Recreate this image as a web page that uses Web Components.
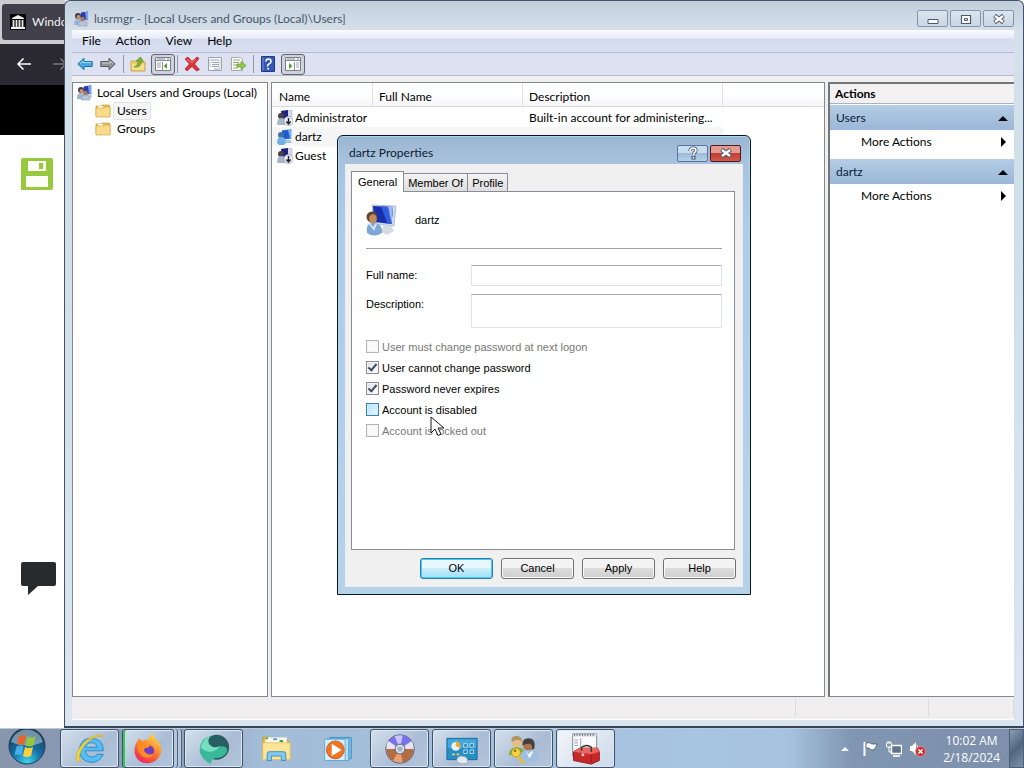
<!DOCTYPE html>
<html lang="en">
<head>
<meta charset="utf-8">
<title>lusrmgr</title>
<style>
html,body{height:100%;margin:0}
body{font:12px/18px Lato,"Noto Sans",sans-serif;color:#111;background:#fff;overflow:hidden}
</style>
</head>
<body>
<desk-top>
  <browser-window></browser-window>
  <mmc-window heading="lusrmgr - [Local Users and Groups (Local)\Users]">
    <menu-bar slot="bars"></menu-bar>
    <tool-bar slot="bars"></tool-bar>
    <scope-tree></scope-tree>
    <user-list></user-list>
    <action-pane></action-pane>
  </mmc-window>
  <user-dialog></user-dialog>
  <mouse-pointer></mouse-pointer>
  <task-bar slot="bar"></task-bar>
</desk-top>
<script>
const define = (name, html, setup) => {
  const t = document.createElement('template');
  t.innerHTML = html;
  customElements.define(name, class extends HTMLElement {
    constructor() {
      super();
      this.attachShadow({mode: 'open'}).append(t.content.cloneNode(true));
    }
    connectedCallback() { if (setup) setup(this, this.shadowRoot); }
  });
};

const userSmall = `<path d="M6 1l9-1v10l-9 1z" fill="#c5cee4"/><path d="M7 1.500l7-1v8l-7 1z" fill="#2439b4"/><path d="M11 1l3-.5v8l-2 .3z" fill="#7b9bea"/><path d="M9 10h5l1 3H8z" fill="#bfc8da"/>`;
const icons = {
  users: [16, userSmall + `<circle cx="4" cy="5" r="3" fill="#3c3d4c"/><circle cx="4.500" cy="6" r="2" fill="#c99262"/><path d="M0 13q0-5 4-5t4 5v1H0z" fill="#9fb4d2"/><circle cx="8.500" cy="8" r="2.300" fill="#a8794f"/><path d="M4 15q0-5 4.500-5t4.500 5z" fill="#b9c6d8" stroke="#8190a8" stroke-width=".5"/>`],
  user: [16, `<path d="M5 1l10-1v10L5 11z" fill="#b5d2f0"/><path d="M5 1.500l9-1v9l-9 1z" fill="#2159c9"/><path d="M11 1l3-.5v9l-1 .1z" fill="#79b0f2"/><path d="M9 11h4l2 3H8z" fill="#a5c5e6"/><circle cx="4" cy="6" r="3" fill="#3f74a8"/><path d="M0 14q0-6 4.500-6T9 14l-2 2H2z" fill="#72afe7"/>`],
  userOff: [16, `<path d="M5 1l10-1v9l-10 1z" fill="#d5d8e4" stroke="#a3a9bb" stroke-width=".5"/><path d="M4 1l7-1v8L5 9z" fill="#1a2483"/><circle cx="4" cy="6" r="3" fill="#4d3f43"/><path d="M0 14q0-6 4.500-6T9 14l-1 1H1z" fill="#a6b6cf"/><circle cx="11.500" cy="11" r="4.500" fill="#f2f4f7" stroke="#8a919f" stroke-width=".7"/><path d="M11.500 8v5.500M9.300 11.500l2.200 2.300 2.200-2.300" fill="none" stroke="#1c2533" stroke-width="1.500"/>`],
  userBig: [32, `<path d="M6 1L30 2l-2 20-20-2z" fill="#d2d9e6" stroke="#96a3bd" stroke-width=".6"/><path d="M7 2l20 1-1.500 17L8 18z" fill="#1730ae"/><path d="M15 2.400l12 .6-1.500 17-4-.4z" fill="#315de0"/><path d="M22 2.700l5 .3-1.500 16z" fill="#9bb8f6"/><path d="M18 21l7 1 3 5-7 4-6-3z" fill="#d4dae3"/><circle cx="6" cy="13" r="5.500" fill="#604631"/><ellipse cx="7" cy="15" rx="3.800" ry="4.800" fill="#c18c5d"/><path d="M1 29c-1-7 1-10 6-10s10 3 9 10q-8 5-15 0z" fill="#7fa7d6"/><path d="M4 19l3 4 3-4 1 1-3 7-5-7z" fill="#d8e7f6"/>`],
  folder: [16, `<path d="M1 3h5l1-1h7l1 1v10H1z" fill="#e5bd59" stroke="#c79b3d" stroke-width=".7"/><path d="M3 3h5v2H3z" fill="#fff9df"/><path d="M1 5h8l1-1h5v10H1z" fill="#f8dc8c" stroke="#d5aa4c" stroke-width=".7"/>`],
  back: [16, `<path d="M.8 8L7 2.300V5.500h8.200v5H7v3.200z" fill="#42a9e4" stroke="#2275ac"/><path d="M3 7.500L6 5v1.500h8" stroke="#a0ddfa" fill="none"/>`],
  forward: [16, `<path d="M15.200 8L9 2.300V5.500H.8v5H9v3.200z" fill="#929599" stroke="#57595f"/><path d="M2 7h8V5l3 2.500" stroke="#c9cbce" fill="none"/>`],
  up: [16, `<path d="M1 5h5l1 1h8v9H1z" fill="#f1ce65" stroke="#c59d41" stroke-width=".8"/><path d="M2 8h12v6H2z" fill="#f9df8b"/><path d="M4 11q4-1 4.500-6H6l4.500-4 3 4.500h-2Q11 12 4 11z" fill="#7eb52e" stroke="#5c8823" stroke-width=".6"/>`],
  paneL: [16, `<path d="M.5 1.500h15v13H.5z" fill="#fff" stroke="#7c8189"/><path d="M1 4.500h14M7.500 6v8" stroke="#888d96"/><path d="M2 3h8M12 3h2" stroke="#7488a0"/><path d="M2 7h4M2 9h4M2 11h4" stroke="#9ca4ae"/><path d="M12 7v6L8.500 10z" fill="#55a338"/>`],
  paneR: [16, `<path d="M.5 1.500h15v13H.5z" fill="#fff" stroke="#7c8189"/><path d="M1 4.500h14M9.500 6v8" stroke="#888d96"/><path d="M2 3h8M12 3h2" stroke="#7488a0"/><path d="M11 7h3M11 9h3M11 11h3" stroke="#9ca4ae"/><path d="M4 7v6l3.500-3z" fill="#55a338"/>`],
  del: [16, `<path d="M1 3l3-2 4 4.500L13 1l2 1.500L10.500 8l5 5.500-3 1.500L8 10.500 3 15l-2-2 4.500-5z" fill="#dc3436" stroke="#ac1e27" stroke-width=".7"/><path d="M3 3l5 4 4-4" stroke="#f0807b" fill="none"/>`],
  props: [16, `<path d="M1.500 1.500h13v13h-13z" fill="#fbfcff" stroke="#9aa1af"/><path d="M4 4h8M5 6.500h7M5 8.500h7M5 10.500h7M7 13h6" stroke="#99a3b4"/><path d="M3 3v8M13 4v8" stroke="#c6ccd7"/>`],
  exportList: [16, `<path d="M1.500 1.500h9l2 2v11h-11z" fill="#fffef4" stroke="#aaab91"/><path d="M3 4h7M3 6.500h6M3 9h4M3 12h5" stroke="#8ba18d"/><path d="M7 8h4V5.500l5 4-5 4V11H7z" fill="#8dcc43" stroke="#5d9a34" stroke-width=".7"/>`],
  help: [16, `<path d="M1.500.5h13v15h-13z" fill="#3457b8" stroke="#203b85"/><path d="M3 1v14" stroke="#6e8bda"/><path d="M6 5.500Q6 3 8.500 3T11 5.500Q11 7 9 8t-1 2.500" fill="none" stroke="#fff" stroke-width="1.600"/><path d="M7.300 11.800h1.800v1.700H7.300z" fill="#fff"/>`],
  archive: [16, `<path d="M0 0h16v16H0z" fill="#050505"/><path d="M1 13h14v2H1zM2 4l6-3 6 3v1H2z" fill="#eee"/><path d="M3.500 6v7M6.500 6v7M9.500 6v7M12.500 6v7" stroke="#e5e5e5" stroke-width="1.800"/>`],
  floppy: [32, `<path d="M2 0h28q2 0 2 2v28q0 2-2 2H0V2q0-2 2-2z" fill="#98c83d"/><path d="M7 3h18v10H7zM5 18h22v11H5z" fill="#fdfff8"/><path d="M18 5h4v6h-4z" fill="#98c83d"/>`],
  bubble: [36, `<path d="M2 0h31q2 0 2 2v20q0 2-2 2H17L7 33V24H2q-2 0-2-2V2q0-2 2-2z" fill="#282b2b"/>`],
  arrowL: [16, `<path d="M15 8H2M7.500 2.500L2 8l5.500 5.500" fill="none" stroke="#fafafa" stroke-width="1.600"/>`],
  arrowR: [16, `<path d="M1 8h13M8.500 2.500L14 8l-5.500 5.500" fill="none" stroke="#777b82" stroke-width="1.400"/>`],
  orb: [40, `<defs><radialGradient id="g" cx=".5" cy=".95" r=".9"><stop offset="0" stop-color="#3dd5ee"/><stop offset=".45" stop-color="#1673a7"/><stop offset="1" stop-color="#173650"/></radialGradient></defs><circle cx="20" cy="20" r="18" fill="url(#g)" stroke="#213c58"/><path d="M4 16a16.500 16.500 0 0 1 32 0q-15 7-32 0z" fill="#bfd3e2" opacity=".55"/><path d="M12 10q4-2 7 0l-2 9q-4-2-7 0z" fill="#ee6127"/><path d="M20.500 10.500q4 2 8 0l-2 9q-4 2-8 0z" fill="#95c83c"/><path d="M9.500 20.500q4-2 7 0l-2 9q-4-2-7 0z" fill="#48aee8"/><path d="M18 21q4 2 8 0l-2 9q-4 2-8 0z" fill="#fcce3b"/>`],
  ie: [36, `<path d="M33 20H13q1 7 7 7 4 0 6-3h7q-4 9-13 9Q6 32 6 19 7 6 19 6q14 0 14 14zM13 16h13q-1-5-6-5-6 0-7 5z" fill="#55bdf0" stroke="#2a83c5"/><path d="M8 31Q2 35 3 24 8 10 21 4q11-4 12 0-5-2-12 2Q10 12 6 25q-1 5 2 6z" fill="#f8d531" stroke="#d9a71c" stroke-width=".7"/>`],
  firefox: [36, `<defs><linearGradient id="f" x1=".8" y1="0" x2=".2" y2="1"><stop stop-color="#ffe14a"/><stop offset=".5" stop-color="#ff7a2d"/><stop offset="1" stop-color="#e7205c"/></linearGradient></defs><path d="M7 8l1-2 4 3q3-2 6-1 2-6 6-7 1 5 6 9 5 8 2 14-4 10-14 10Q6 34 3 23 2 14 7 8z" fill="url(#f)"/><circle cx="19" cy="20" r="6" fill="#7240bf"/><path d="M6 11q4-2 9 1l5 2q-1 3-5 3-3 2 0 5 4 4 9 1-3 7-11 4Q5 22 6 11z" fill="#ff8b26"/>`],
  orbGreen: [36, `<circle cx="21" cy="16" r="14" fill="#285f63"/><path d="M2 21Q1 7 14 3q-5 7 0 11 4 4 10 1 9-1 9 5-3 8-12 8-7 0-6 7Q4 30 2 21z" fill="#39b997"/><path d="M3 16Q6 6 14 3q-5 7 0 11 4 4 10 1-4 7-12 6-6-1-9-5z" fill="#76dfbf"/>`],
  explorer: [36, `<path d="M3 5l6-1 2 3h18l4 3v19H3z" fill="#dfb852" stroke="#c49b3c"/><path d="M6 5h24v7H6z" fill="#fffbe8"/><path d="M6 5h3v2H6zM22 8h4v2h-4z" fill="#42a743"/><path d="M15 6h4v2h-4z" fill="#3a91d3"/><path d="M3 11h31v19H3z" fill="#fae598" stroke="#dfbd5f"/><path d="M8 31V23q0-2 3-2h15q3 0 3 2v8h-5v-5H13v5z" fill="#84c6ec" stroke="#378dc0"/>`],
  media: [36, `<path d="M9 5h24v24H9z" fill="#73bbe6" stroke="#428fbd"/><path d="M6 6h24v25H6z" fill="#b8def4" stroke="#4a9dcb"/><path d="M3 7h23v24H3z" fill="#d5effb" stroke="#57a9d5"/><circle cx="15" cy="19" r="10" fill="#ef7422" stroke="#ce571d"/><path d="M11 12l11 7-11 7z" fill="#fff"/>`],
  disc: [36, `<circle cx="18" cy="18" r="16" fill="#b3b2bd" stroke="#575667"/><path d="M18 18L4 10Q18-6 32 10z" fill="#7773ec"/><path d="M18 18L12 4q5-2 9-1z" fill="#c8c5ff"/><path d="M18 18L3 18q-1-6 2-9zM18 18l13-9q3 4 2 10z" fill="#e6e5f0"/><path d="M18 18L3 18q1 15 15 15 14 0 15-15z" fill="#b66c42"/><path d="M18 18l3 15q-6 1-11-2z" fill="#e6a376"/><circle cx="18" cy="18" r="5.500" fill="#dbe5ee" stroke="#5a5969"/><circle cx="18" cy="18" r="3" fill="#9fb3c8"/>`],
  control: [36, `<path d="M1 6h34v24H1z" fill="#278dc5" stroke="#15679c"/><path d="M2 7h32v10H2z" fill="#44a6d9"/><circle cx="11" cy="15" r="5" fill="#e5f4ff"/><path d="M11 15V9a6 6 0 0 1 5 8z" fill="#f7a92e"/><path d="M20 12h4v4h-4zM27 12h4v4h-4zM20 19h4v4h-4zM27 19h4v4h-4z" fill="#1e7cb1" stroke="#bce5fa"/><path d="M7 24h3M12 24h3" stroke="#f8cf64" stroke-width="2"/><path d="M12 32q0-6 6-6t7 7q-7 4-13-1z" fill="#e3e8ed" stroke="#9ba9b5"/>`],
  people: [36, `<circle cx="10" cy="10" r="6" fill="#e5bd86"/><path d="M4 10Q3 3 10 3q6 1 6 7-4-5-12 0z" fill="#ae9664"/><path d="M1 25q0-9 9-9t10 9z" fill="#83ae45"/><circle cx="23" cy="14" r="6" fill="#aa764a"/><path d="M16 14q0-8 7-8t7 7-3 5q1-6-4-6-4 0-7 2z" fill="#44403f"/><path d="M13 31q-1-12 10-12 12 0 11 11-11 5-21 1z" fill="#9dbde1"/><path d="M20 20l3 4 4-4 1 2-4 7z" fill="#eef6ff"/><circle cx="9" cy="22" r="5" fill="#f7d43c" stroke="#b5921e"/><circle cx="8" cy="20" r="1.500" fill="#83712a"/><path d="M11 26l7 8" stroke="#e9bd26" stroke-width="3"/>`],
  toolbox: [36, `<path d="M3 1h27v25H3z" fill="#f8fafc" stroke="#777e8b"/><path d="M3 1h27v3H3z" fill="#d5dae3"/><path d="M5 1v2M8 1v2M11 1v2M14 1v2M17 1v2M20 1v2M23 1v2M26 1v2" stroke="#494f59"/><path d="M12 6v14M5 8h4M5 11h4M5 14h4" stroke="#8b94a4"/><path d="M4 21l7-4h20l2 4v10l-9 4-20-4z" fill="#c92829" stroke="#8e1519"/><path d="M4 21l20 3 9-3-2-4H11z" fill="#eb6560"/><path d="M13 20v-4q6-4 11 0v5" fill="none" stroke="#363334" stroke-width="1.600"/><path d="M24 24v10" stroke="#951b20"/><path d="M13 23h3v3h-3z" fill="#e4cdcb"/>`],
  flag: [16, `<path d="M2.500 1v14" stroke="#fff" stroke-width="2"/><path d="M4 2q4-1 6 1h5q-1 5-4 6-3 0-4-2H4z" fill="#f9fcff" stroke="#3b4c62" stroke-width=".7"/>`],
  network: [16, `<path d="M5.500 4.500h10v8h-10z" fill="#5f748c" stroke="#fff" stroke-width="1.400"/><path d="M7 15h7" stroke="#fff" stroke-width="1.600"/><path d="M.5 2h5v4h-5zM2 0v2M4 0v2M3 6v5h2" fill="none" stroke="#fff"/>`],
  mute: [16, `<path d="M0 5h2l4-4v13l-4-4H0z" fill="#fff"/><path d="M7 4q2 3 0 7" stroke="#d8e1ec" fill="none"/><circle cx="10.500" cy="10.500" r="5" fill="#c72f31" stroke="#f0a19b" stroke-width=".7"/><path d="M8.500 8.500l4 4m0-4l-4 4" stroke="#fff" stroke-width="1.500"/>`],
  trayUp: [10, `<path d="M1 7l4-4 4 4z" fill="#f4f8fd"/>`],
  collapse: [10, `<path d="M0 8l5-5 5 5z" fill="#050510"/>`],
  more: [10, `<path d="M3 0l5 5-5 5z" fill="#000"/>`],
  min: [14, `<path d="M2 7.500h10v4H2z" fill="#fff" stroke="#4d5a6d"/>`],
  max: [14, `<path d="M2.500 3.500h9v8h-9z" fill="#fff" stroke="#4d5a6d" stroke-width="1.200"/><path d="M5.500 6.500h3v2h-3z" fill="#dfe8f2" stroke="#4d5a6d"/>`],
  close: [14, `<path d="M2.500 3.500l9 7M11.500 3.500l-9 7" stroke="#4d5a6d" stroke-width="4.200"/><path d="M3 4l8 6M11 4l-8 6" stroke="#fff" stroke-width="2.300"/>`],
  query: [14, `<path d="M4 5q0-3 3-3t3 2.500Q10 6 8 7L7.500 9" fill="none" stroke="#40526f" stroke-width="3.200"/><path d="M5.500 10h4v3.500h-4z" fill="#40526f"/><path d="M4 5q0-3 3-3t3 2.500Q10 6 8 7L7.500 9M7.500 10.800v1.800" fill="none" stroke="#fff" stroke-width="1.700"/>`],
  pointer: [20, `<path d="M1 1v16l4-4 3 6.500 3-1.300L8 12h6z" fill="#fff" stroke="#1b1b1f"/>`]
};
customElements.define('ui-icon', class extends HTMLElement {
  static observedAttributes = ['name', 'size'];
  constructor() { super(); this.attachShadow({mode: 'open'}); }
  connectedCallback() { this.draw(); }
  attributeChangedCallback() { this.draw(); }
  draw() {
    const icon = icons[this.getAttribute('name')];
    if (!icon) return;
    const [box, body] = icon;
    const size = this.getAttribute('size') || box;
    this.shadowRoot.innerHTML = `<style>:host{display:inline-block;flex:none}svg{display:block}</style><svg width="${size}" height="${size}" viewBox="0 0 ${box} ${box}" aria-hidden="true">${body}</svg>`;
  }
});

define('desk-top', `<style>
:host{display:grid;grid-template-rows:1fr 40px;height:100vh;overflow:hidden}
main{position:relative;min-height:0}
</style><main><slot></slot></main><slot name="bar"></slot>`);

define('browser-window', `<style>
:host{display:flex;flex-direction:column;width:65px;height:100%;overflow:hidden;background:#fefefe}
.tabs{background:#cbcace;padding:4px 0 4px 2px;height:36px}
.tab{display:flex;align-items:center;gap:6px;background:#403f4a;color:#f2f2f5;border-radius:3px 0 0 3px;height:36px;padding-left:8px;white-space:nowrap}
nav{display:flex;align-items:center;gap:20px;background:#2a2931;height:37px;padding:4px 0 0 16px}
button{all:unset;display:block}
.band{background:#000;height:50px}
.side{display:flex;flex-direction:column;align-items:start;gap:372px;padding:23px 0 0 21px}
</style><div class="tabs"><div class="tab"><ui-icon name="archive"></ui-icon><span>Windo</span></div></div>
<nav><button aria-label="Back"><ui-icon name="arrowL"></ui-icon></button><button aria-label="Forward"><ui-icon name="arrowR"></ui-icon></button></nav>
<div class="band"></div><div class="side"><ui-icon name="floppy"></ui-icon><ui-icon name="bubble"></ui-icon></div>`);

define('mmc-window', `<style>
:host{position:absolute;inset:0 0 0 64px;box-sizing:border-box;display:flex;flex-direction:column;border:1px solid #46506a;border-bottom:2px solid #38465a;border-radius:6px 6px 0 0;padding:0 9px 6px 7px;background:linear-gradient(#c2cfdc,#d5e0ea 30px,#cfe0e8 200px,#dbe5ef 100%);overflow:hidden}
header{display:flex;align-items:center;gap:4px;height:29px;padding:6px 0 0 2px;box-sizing:border-box;color:#48566a}
h1{flex:1;font:inherit;margin:0;white-space:nowrap}
.win{display:flex;gap:2px}
.win button{all:unset;box-sizing:border-box;display:grid;place-items:center;width:31px;height:17px;border:1px solid #8494ad;border-radius:2px;background:linear-gradient(#dce5ee,#c9d6e3)}
.body{flex:1;min-height:0;background:#f0f0f0;display:grid;grid-template-columns:196px minmax(0,1fr) 186px;gap:3px;padding-top:6px}
footer{display:grid;grid-template-columns:1fr 133px 85px;height:22px;background:#f0eeee;border-bottom:1px solid #fff}
footer span{border-right:1px solid #dcdada;margin:2px 0}
</style><header><ui-icon name="users"></ui-icon><h1></h1><div class="win"><button aria-label="Minimize"><ui-icon name="min"></ui-icon></button><button aria-label="Restore"><ui-icon name="max"></ui-icon></button><button aria-label="Close"><ui-icon name="close"></ui-icon></button></div></header>
<slot name="bars"></slot><div class="body"><slot></slot></div><footer><span></span><span></span><span></span></footer>`,
(el, r) => { r.querySelector('h1').textContent = el.getAttribute('heading'); });

define('menu-bar', `<style>
:host{display:flex;gap:15px;align-items:center;height:22px;padding:0 10px;background:linear-gradient(#fafbfe,#e9edf7 8px,#d5dbee 9px,#d8dff0);border-bottom:1px solid #b4b9cf;color:#000}
button{all:unset}
</style><button>File</button><button>Action</button><button>View</button><button>Help</button>`);

define('tool-bar', `<style>
:host{display:flex;align-items:center;gap:3px;height:22px;padding:0 3px;background:#dde1f1;border-bottom:1px solid #b4b9cf}
button{all:unset;box-sizing:border-box;display:grid;place-items:center;width:20px;height:20px}
button.on{width:24px;height:21px;border:1px solid #62666f;border-radius:3px;background:#cfd2dc}
i{width:1px;height:18px;background:#9298a8;margin:0 1px 0 2px}
.on+i{margin-left:-1px}
</style><button aria-label="Back"><ui-icon name="back"></ui-icon></button><button aria-label="Forward"><ui-icon name="forward"></ui-icon></button><i></i><button aria-label="Up one level"><ui-icon name="up"></ui-icon></button><button class="on" aria-label="Console tree"><ui-icon name="paneL"></ui-icon></button><i></i><button aria-label="Delete"><ui-icon name="del"></ui-icon></button><button aria-label="Properties"><ui-icon name="props"></ui-icon></button><button aria-label="Export list"><ui-icon name="exportList"></ui-icon></button><i></i><button aria-label="Help"><ui-icon name="help"></ui-icon></button><button class="on" aria-label="Action pane"><ui-icon name="paneR"></ui-icon></button>`);

define('scope-tree', `<style>
:host{display:block;box-sizing:border-box;background:#fff;border:1px solid #828790;padding:1px 4px;color:#000;white-space:nowrap}
ul{list-style:none;margin:0;padding:0}
ul ul{padding-left:18px}
div{display:flex;align-items:center;gap:4px;height:18px}
ul ul div{gap:2px}
ul ul span{padding:0 3px;line-height:16px;border:1px solid transparent}
ul ul .sel{background:#f5f5f5;border-color:#e2e2e2;border-radius:2px}
</style><ul><li><div><ui-icon name="users"></ui-icon><span>Local Users and Groups (Local)</span></div><ul><li><div><ui-icon name="folder"></ui-icon><span class="sel">Users</span></div></li><li><div><ui-icon name="folder"></ui-icon><span>Groups</span></div></li></ul></li></ul>`);

define('user-list', `<style>
:host{display:block;box-sizing:border-box;background:#fff;border:1px solid #828790;color:#000;overflow:hidden}
table{width:100%;table-layout:fixed;border-collapse:separate;border-spacing:0}
th{font-weight:400;text-align:left;height:19px;padding:4px 7px 0 6px;border-bottom:1px solid #d9d9dc;border-right:1px solid #e1e2e6;background:linear-gradient(#fff 50%,#f6f6f8)}
th:last-child{border-right:0}
td{height:19px;padding:0 0 0 6px;white-space:nowrap;overflow:hidden}
.who{display:flex;align-items:center;gap:2px}
td:first-child{padding-left:5px}
th:first-child{padding-left:7px}
.sel td:not(:last-child){background:#f5f5f5}
tbody::before{content:"";display:block;height:1px}
</style><table><colgroup><col style="width:101px"><col style="width:150px"><col style="width:200px"><col></colgroup><thead><tr><th>Name</th><th>Full Name</th><th>Description</th><th></th></tr></thead><tbody>
<tr><td><div class="who"><ui-icon name="userOff"></ui-icon>Administrator</div></td><td></td><td>Built-in account for administering...</td><td></td></tr>
<tr class="sel"><td><div class="who"><ui-icon name="user"></ui-icon>dartz</div></td><td></td><td></td><td></td></tr>
<tr><td><div class="who"><ui-icon name="userOff"></ui-icon>Guest</div></td><td></td><td></td><td></td></tr></tbody></table>`);

define('action-pane', `<style>
:host{display:block;box-sizing:border-box;background:#fff;border:2px solid #747679;border-right:0;border-bottom:1px solid #828790;color:#000}
h2{margin:0 0 1px;font:inherit;font-weight:700;line-height:18px;padding:1px 0 0 5px;background:#f2f0f0;border-bottom:1px solid #a9b0cb}
</style><h2>Actions</h2><action-group heading="Users"></action-group><action-group heading="dartz"></action-group>`);

define('action-group', `<style>
:host{display:block;padding-bottom:5px}
button{all:unset;box-sizing:border-box;display:flex;width:100%;align-items:center;justify-content:space-between;height:25px;padding:0 6px}
.head{background:linear-gradient(#b3cde4,#9bb6d7);color:#0c2038}
.item{height:24px;padding-left:31px}
</style><button class="head"><span></span><ui-icon name="collapse"></ui-icon></button><button class="item"><span>More Actions</span><ui-icon name="more"></ui-icon></button>`,
(el, r) => { r.querySelector('.head span').textContent = el.getAttribute('heading'); });

define('check-row', `<style>
:host{display:block}
label{display:flex;align-items:center;gap:3px;height:21px}
:host([off]) label{color:#777}
input{appearance:none;box-sizing:border-box;display:grid;place-items:center;width:13px;height:13px;margin:0;border:1px solid #8e8f8f;background:linear-gradient(135deg,#dcdfe4,#fff);box-shadow:inset 0 0 0 1px #f4f4f4}
:host([off]) input{border-color:#b5b5b5;background:#fafafa}
:host([hot]) input{border-color:#3b83ae;background:linear-gradient(135deg,#b5e0f8,#e7f7ff);box-shadow:inset 0 0 0 1px #cdeefd}
input:checked::after{content:"";width:3px;height:7px;margin-bottom:2px;border:solid #414b68;border-width:0 2px 2px 0;transform:rotate(40deg)}
</style><label><input type="checkbox"><span><slot></slot></span></label>`,
(el, r) => { const i = r.querySelector('input'); i.checked = el.hasAttribute('on'); i.disabled = el.hasAttribute('off'); });

define('user-dialog', `<style>
:host{position:absolute;left:337px;top:135px;width:414px;height:460px;box-sizing:border-box;display:flex;flex-direction:column;border:1px solid #0c1420;border-radius:6px 6px 0 0;padding:0 7px 7px;background:linear-gradient(#9bb6d2,#a9c3df 28px,#b0cce6 100px,#b7d1e7);box-shadow:inset 0 0 0 1px #a5d9f2;color:#000}
header{display:flex;align-items:center;gap:2px;height:28px;padding:6px 2px 0 4px;box-sizing:border-box}
h1{flex:1;font:inherit;margin:0;color:#0c1c30}
header button{all:unset;box-sizing:border-box;display:grid;place-items:center;width:31px;height:17px;border:1px solid #55779f;border-radius:2px;background:linear-gradient(#c8dcf0 50%,#9dbbd9 50%,#b7cfe7)}
header button.x{border-color:#4d1b23;background:linear-gradient(#e49a8e 45%,#c23c33 50%,#d15c49)}
.client{flex:1;display:flex;flex-direction:column;background:#f0f0f0;padding:7px 6px 7px 5px;border:1px solid #e3f0f8;border-top:0;font:11px/14px "Liberation Sans",Arial,sans-serif}
.tabs{display:flex;align-items:flex-end}
.tabs button{all:unset;box-sizing:border-box;height:18px;line-height:18px;padding:0 4px;border:1px solid #898c95;border-bottom:0;border-left:0;background:linear-gradient(#f3f3f3,#dedede)}
.tabs button[aria-selected=true]{height:21px;padding:0 6px;border-left:1px solid #898c95;background:#fff;margin-bottom:-1px;position:relative}
.page{flex:1;border:1px solid #898c95;background:#fff;padding:12px 12px 0 14px;margin-right:1px}
.id{display:flex;align-items:center;gap:17px;padding-bottom:12px;border-bottom:1px solid #a0a0a0;margin-bottom:16px}
.field{display:grid;grid-template-columns:105px 1fr;margin-bottom:8px}
.field label{padding-top:3px}
input,textarea{box-sizing:border-box;width:100%;height:21px;margin:0;display:block;border:1px solid #e2e3ea;border-top-color:#abadb3;border-radius:0;background:#fff;font:inherit;resize:none;outline:0}
textarea{height:34px}
.field+.checks{margin-top:8px}
.foot{display:flex;justify-content:flex-end;gap:8px;padding-top:8px}
.foot button{all:unset;box-sizing:border-box;width:73px;height:21px;line-height:19px;text-align:center;border:1px solid #707070;border-radius:3px;background:linear-gradient(#f3f3f3 45%,#dcdcdc 50%,#cfcfcf);box-shadow:inset 0 0 0 1px #fafafa}
.foot button.ok{border-color:#2c7ba7;background:linear-gradient(#e9f8fe 45%,#c8edfb 50%,#9fe0f8);box-shadow:inset 0 0 0 1px #49ccf5}
</style><header><h1>dartz Properties</h1><button aria-label="Context help"><ui-icon name="query"></ui-icon></button><button class="x" aria-label="Close"><ui-icon name="close"></ui-icon></button></header>
<div class="client"><div class="tabs" role="tablist"><button role="tab" aria-selected="true">General</button><button role="tab">Member Of</button><button role="tab">Profile</button></div>
<div class="page"><div class="id"><ui-icon name="userBig"></ui-icon><span>dartz</span></div>
<div class="field"><label for="n">Full name:</label><input id="n" type="text"></div>
<div class="field"><label for="d">Description:</label><textarea id="d"></textarea></div>
<div class="checks"><check-row off>User must change password at next logon</check-row><check-row on>User cannot change password</check-row><check-row on>Password never expires</check-row><check-row hot>Account is disabled</check-row><check-row off>Account is locked out</check-row></div></div>
<div class="foot"><button class="ok">OK</button><button>Cancel</button><button>Apply</button><button>Help</button></div></div>`);

define('mouse-pointer', `<style>:host{position:absolute;left:430px;top:416px;pointer-events:none}</style><ui-icon name="pointer"></ui-icon>`);

define('task-button', `<style>
:host{display:block;width:59px}
button{all:unset;box-sizing:border-box;display:grid;place-items:center;width:100%;height:39px;border:1px solid transparent;border-radius:3px}
:host([open]) button{border-color:#3e5169;background:linear-gradient(135deg,#d5e0ec,#a9bcd4 60%,#b4c6db);box-shadow:inset 0 0 0 1px #dbe7f3}
:host([active]) button{background:linear-gradient(135deg,#f2f6fa,#ccd9e8)}
:host([stack]) button{width:52px;box-shadow:inset 2px 0 #34c955,inset 0 0 0 1px #dbe7f3,3px 0 #b3c6dc,4px 0 #50647f,7px 0 #b3c6dc,8px 0 #50647f}
</style><button><ui-icon size="32"></ui-icon></button>`,
(el, r) => {
  r.querySelector('ui-icon').setAttribute('name', el.getAttribute('icon'));
  r.querySelector('button').setAttribute('aria-label', el.getAttribute('label'));
});

define('task-bar', `<style>
:host{display:flex;align-items:center;box-sizing:border-box;height:40px;border-top:1px solid #bccbdc;background:linear-gradient(90deg,#8795ad,#8fa1bb 180px,#a3bcd8 260px,#a7c4e1 700px,#a6c2de 790px,#8196b1 850px,#7c8fab);color:#fff;overflow:hidden}
.start{all:unset;padding:0 13px 0 7px}
.apps{display:flex;gap:3px;flex:1}
.tray{display:flex;align-items:center;gap:8px}
.tray>:first-child{margin-right:4px}
.clock{padding:0 9px 0 9px;text-align:center;line-height:17px;font-family:"Open Sans",sans-serif}
.show{all:unset;box-sizing:border-box;width:15px;height:39px;border:1px solid #4d6079;background:linear-gradient(135deg,#8b9cb2,#52667f 50%,#7f92aa)}
</style><button class="start" aria-label="Start"><ui-icon name="orb"></ui-icon></button><div class="apps">
<task-button open icon="ie" label="Internet Explorer"></task-button><task-button open stack icon="firefox" label="Firefox"></task-button><task-button open icon="orbGreen" label="Browser"></task-button><task-button icon="explorer" label="Explorer"></task-button><task-button icon="media" label="Media Player"></task-button><task-button open icon="disc" label="Disc"></task-button><task-button open icon="control" label="Control Panel"></task-button><task-button open icon="people" label="User Accounts"></task-button><task-button open active icon="toolbox" label="lusrmgr"></task-button></div>
<div class="tray"><ui-icon name="trayUp"></ui-icon><ui-icon name="flag"></ui-icon><ui-icon name="network"></ui-icon><ui-icon name="mute"></ui-icon><div class="clock">10:02 AM<br>2/18/2024</div></div><button class="show" aria-label="Show desktop"></button>`);
</script>
</body>
</html>
